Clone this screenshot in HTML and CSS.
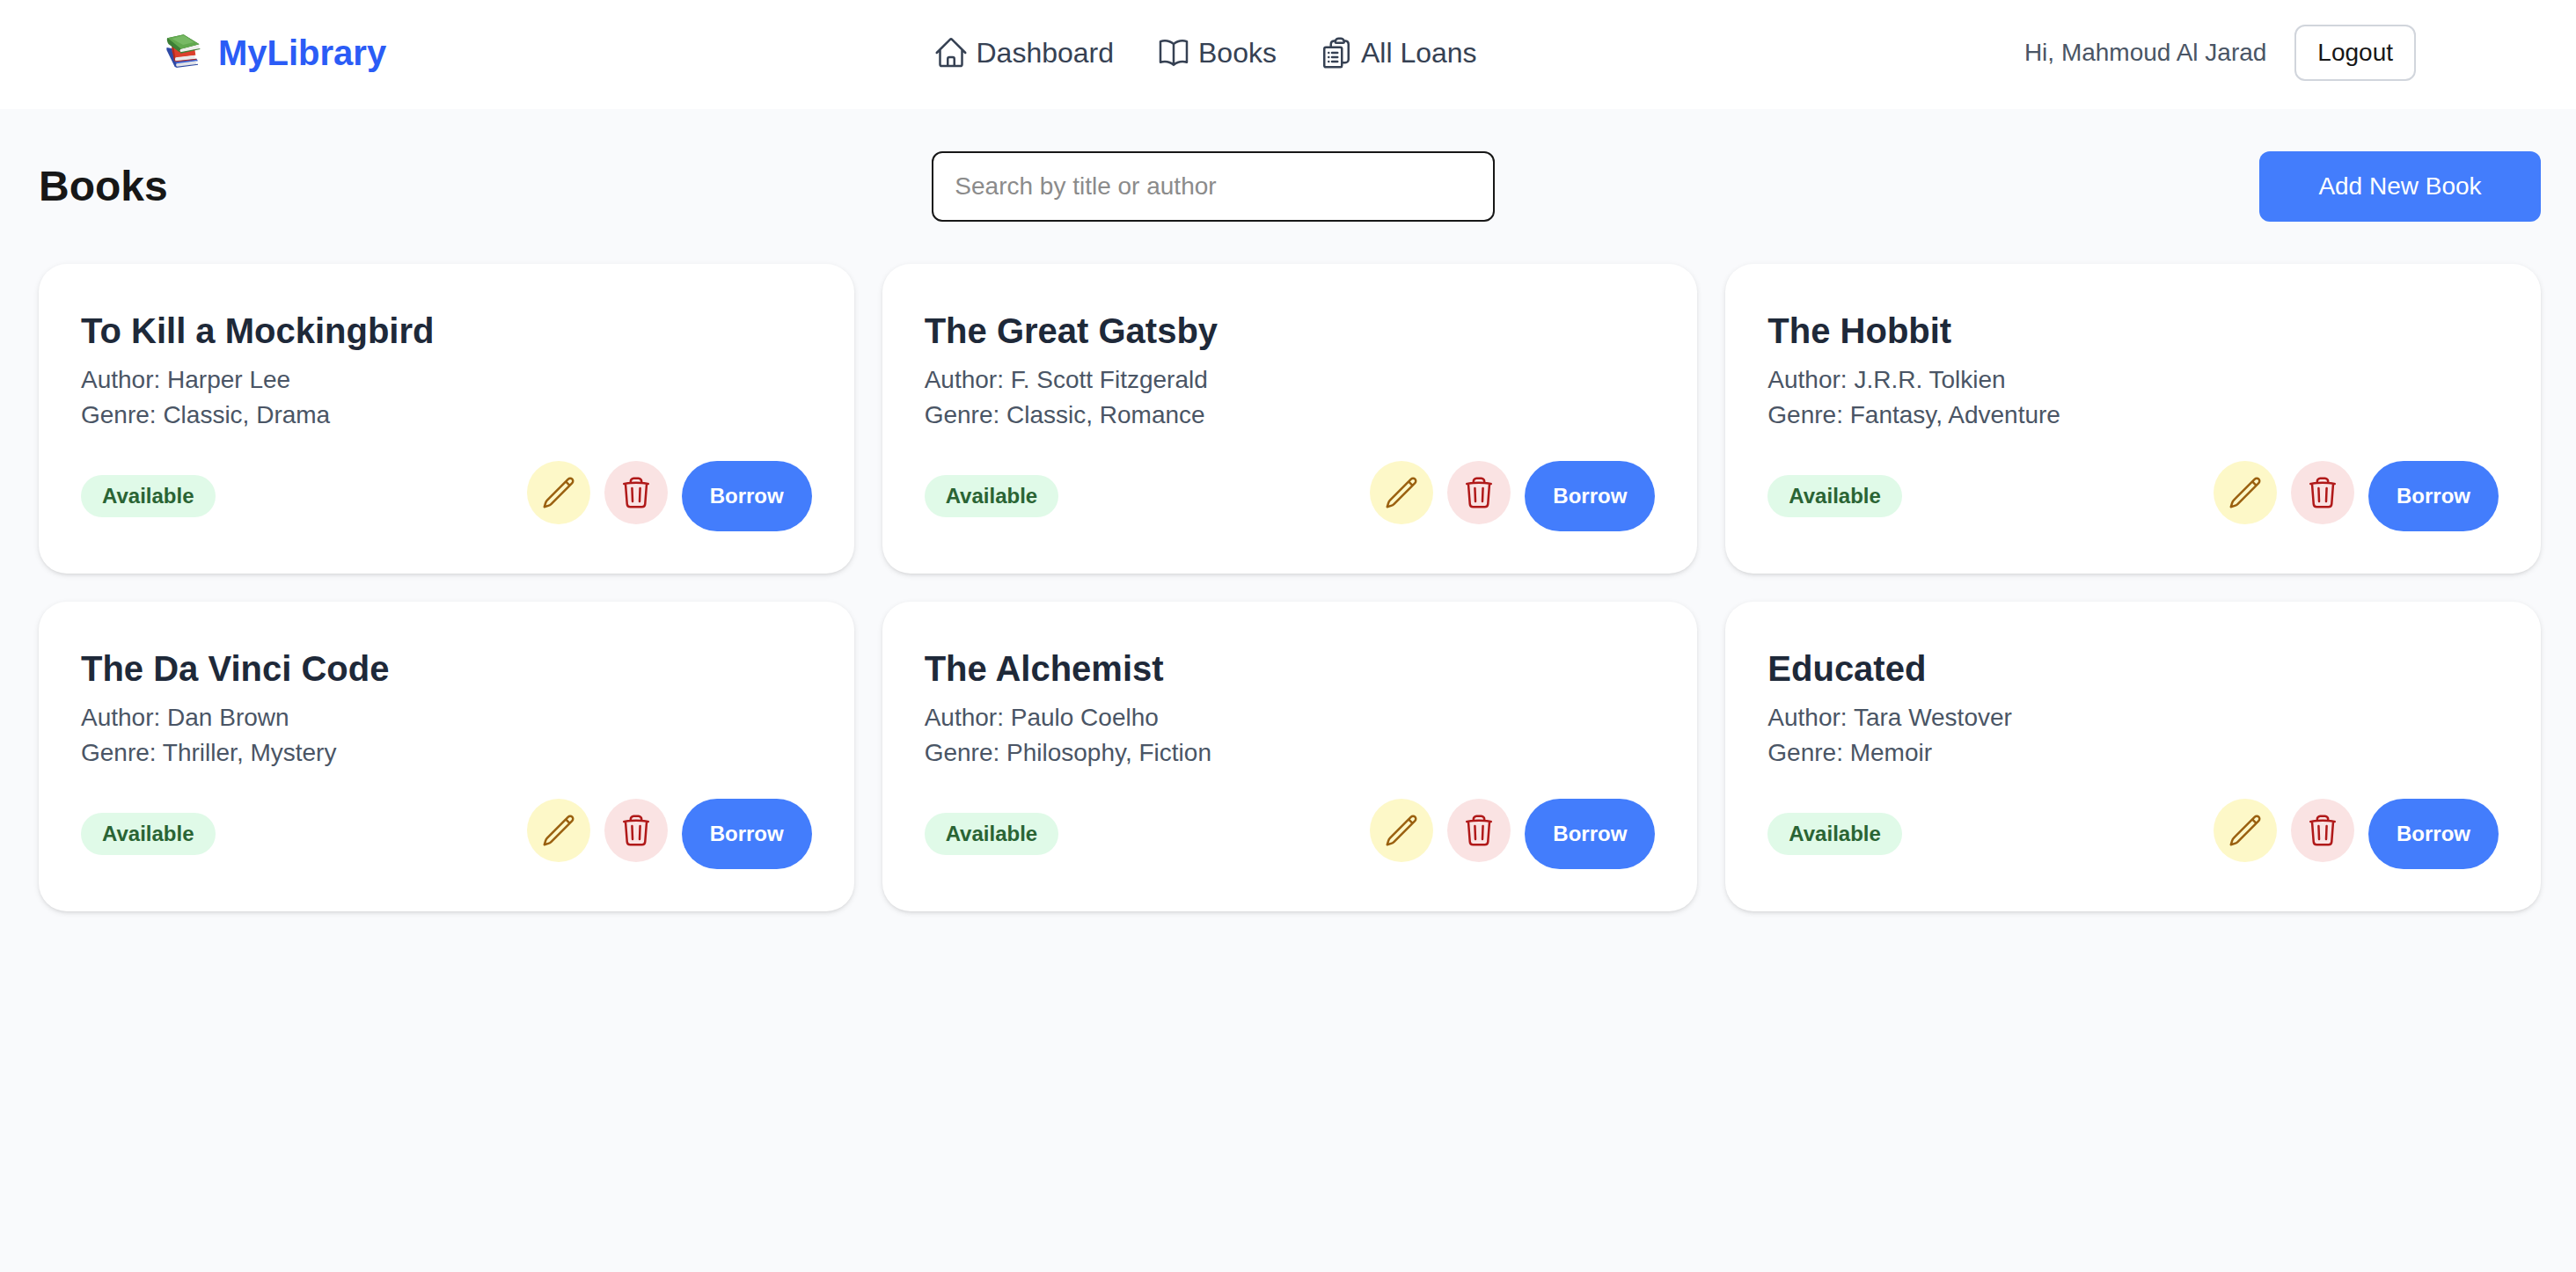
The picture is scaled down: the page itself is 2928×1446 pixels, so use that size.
FILE: index.html
```html
<!DOCTYPE html>
<html lang="en">
<head>
<meta charset="utf-8">
<meta name="viewport" content="width=device-width, initial-scale=1">
<title>MyLibrary</title>
<link rel="stylesheet" href="styles.css">
</head>
<body>
<svg class="sprite" aria-hidden="true">
  <symbol id="pencil" viewBox="0 0 24 24"><path d="m16.862 4.487 1.687-1.688a1.875 1.875 0 1 1 2.652 2.652L6.832 19.82a4.5 4.5 0 0 1-1.897 1.13l-2.685.8.8-2.685a4.5 4.5 0 0 1 1.13-1.897L16.863 4.487Zm0 0L19.5 7.125"/></symbol>
  <symbol id="trash" viewBox="0 0 24 24"><path d="m14.74 9-.346 9m-4.788 0L9.26 9m9.968-3.21c.342.052.682.107 1.022.166m-1.022-.165L18.16 19.673a2.25 2.25 0 0 1-2.244 2.077H8.084a2.25 2.25 0 0 1-2.244-2.077L4.772 5.79m14.456 0a48.108 48.108 0 0 0-3.478-.397m-12 .562c.34-.059.68-.114 1.022-.165m0 0a48.11 48.11 0 0 1 3.478-.397m7.5 0v-.916c0-1.18-.91-2.164-2.09-2.201a51.964 51.964 0 0 0-3.32 0c-1.18.037-2.09 1.022-2.09 2.201v.916m7.5 0a48.667 48.667 0 0 0-7.5 0"/></symbol>
</svg>
<header class="header">
  <div class="header-inner">
    <a class="logo" href="#">
      <svg class="logo-mark" viewBox="0 0 144 144" aria-hidden="true">
        <path d="M11 54l20 4 20 50-7 14-6-2-25-52c-3-5-4-10-2-14z" fill="#2f4aa6"/>
        <path d="M36 98l76-6 5 8-70 12z" fill="#3f62cf"/>
        <path d="M44 109l68-9c-3 4-2 8 1 11l-67 9c-4-3-5-7-2-11z" fill="#dfe2e8"/>
        <path d="M44 119l73-9v3l-74 10z" fill="#2b479f"/>
        <path d="M28 48l32 20 46-8 3 20-70 10-10-22z" fill="#dc3f2c"/>
        <path d="M28 48l6 4 8 49-6-1-6-30z" fill="#b32a1f"/>
        <path d="M41 88l67-8c-3 4-2 8 0 13l-66 8c-4-4-4-9-1-13z" fill="#e9e9eb"/>
        <path d="M40 100l72-8v3l-71 8z" fill="#b32a1f"/>
        <path d="M12 22l56-12 54 33-64 17c-4 4-3 8 0 13L17 43c-4-6-7-14-5-21z" fill="#3d7f35"/>
        <path d="M14 22l54-12 53 33-61 16z" fill="#62a94f"/>
        <path d="M28 24l40-11 36 23-38 9z" fill="#77b964"/>
        <path d="M59 60l63-15c-4 4-3 9 0 13l-62 13c-4-3-4-8-1-11z" fill="#efefed"/>
        <path d="M57 70l67-13v3l-66 14z" fill="#3d7f35"/>
      </svg>
      <span>MyLibrary</span>
    </a>
    <nav class="nav">
      <a href="#"><svg class="icon" viewBox="0 0 24 24" aria-hidden="true"><path d="m2.250 12 8.954-8.955c.44-.439 1.152-.439 1.591 0L21.750 12M4.500 9.750v10.125c0 .621.504 1.125 1.125 1.125H9.750v-4.875c0-.621.504-1.125 1.125-1.125h2.250c.621 0 1.125.504 1.125 1.125V21h4.125c.621 0 1.125-.504 1.125-1.125V9.750M8.250 21h8.250"/></svg><span>Dashboard</span></a>
      <a href="#"><svg class="icon" viewBox="0 0 24 24" aria-hidden="true"><path d="M12 6.042A8.967 8.967 0 0 0 6 3.750c-1.052 0-2.062.180-3 .512v14.250A8.987 8.987 0 0 1 6 18c2.305 0 4.408.867 6 2.292m0-14.250a8.966 8.966 0 0 1 6-2.292c1.052 0 2.062.180 3 .512v14.250A8.987 8.987 0 0 0 18 18a8.967 8.967 0 0 0-6 2.292m0-14.250v14.250"/></svg><span>Books</span></a>
      <a href="#"><svg class="icon" viewBox="0 0 24 24" aria-hidden="true"><path d="M9 12h3.750M9 15h3.750M9 18h3.750m3 .750H18a2.250 2.250 0 0 0 2.250-2.250V6.108c0-1.135-.845-2.098-1.976-2.192a48.424 48.424 0 0 0-1.123-.080m-5.801 0c-.065.210-.100.433-.100.664 0 .414.336.750.750.750h4.500a.750.750 0 0 0 .750-.750 2.250 2.250 0 0 0-.100-.664m-5.800 0A2.251 2.251 0 0 1 13.500 2.250H15c1.012 0 1.867.668 2.150 1.586m-5.800 0c-.376.023-.750.050-1.124.080C9.095 4.010 8.250 4.973 8.250 6.108V8.250m0 0H4.875c-.621 0-1.125.504-1.125 1.125v11.250c0 .621.504 1.125 1.125 1.125h9.750c.621 0 1.125-.504 1.125-1.125V9.375c0-.621-.504-1.125-1.125-1.125H8.250ZM6.750 12h.008v.008H6.750V12Zm0 3h.008v.008H6.750V15Zm0 3h.008v.008H6.750V18Z"/></svg><span>All Loans</span></a>
    </nav>
    <div class="user">
      <span>Hi, Mahmoud Al Jarad</span>
      <button class="logout" type="button">Logout</button>
    </div>
  </div>
</header>
<main class="main">
  <div class="toolbar">
    <h1>Books</h1>
    <input class="search" type="text" placeholder="Search by title or author" aria-label="Search by title or author">
    <button class="add" type="button">Add New Book</button>
  </div>
  <div class="grid">
    <article class="card">
      <h2>To Kill a Mockingbird</h2>
      <p>Author: Harper Lee</p>
      <p>Genre: Classic, Drama</p>
      <div class="card-footer">
        <span class="badge">Available</span>
        <div class="actions">
          <button class="round edit" type="button" aria-label="Edit"><svg class="icon"><use href="#pencil"/></svg></button>
          <button class="round delete" type="button" aria-label="Delete"><svg class="icon"><use href="#trash"/></svg></button>
          <button class="borrow" type="button">Borrow</button>
        </div>
      </div>
    </article>
    <article class="card">
      <h2>The Great Gatsby</h2>
      <p>Author: F. Scott Fitzgerald</p>
      <p>Genre: Classic, Romance</p>
      <div class="card-footer">
        <span class="badge">Available</span>
        <div class="actions">
          <button class="round edit" type="button" aria-label="Edit"><svg class="icon"><use href="#pencil"/></svg></button>
          <button class="round delete" type="button" aria-label="Delete"><svg class="icon"><use href="#trash"/></svg></button>
          <button class="borrow" type="button">Borrow</button>
        </div>
      </div>
    </article>
    <article class="card">
      <h2>The Hobbit</h2>
      <p>Author: J.R.R. Tolkien</p>
      <p>Genre: Fantasy, Adventure</p>
      <div class="card-footer">
        <span class="badge">Available</span>
        <div class="actions">
          <button class="round edit" type="button" aria-label="Edit"><svg class="icon"><use href="#pencil"/></svg></button>
          <button class="round delete" type="button" aria-label="Delete"><svg class="icon"><use href="#trash"/></svg></button>
          <button class="borrow" type="button">Borrow</button>
        </div>
      </div>
    </article>
    <article class="card">
      <h2>The Da Vinci Code</h2>
      <p>Author: Dan Brown</p>
      <p>Genre: Thriller, Mystery</p>
      <div class="card-footer">
        <span class="badge">Available</span>
        <div class="actions">
          <button class="round edit" type="button" aria-label="Edit"><svg class="icon"><use href="#pencil"/></svg></button>
          <button class="round delete" type="button" aria-label="Delete"><svg class="icon"><use href="#trash"/></svg></button>
          <button class="borrow" type="button">Borrow</button>
        </div>
      </div>
    </article>
    <article class="card">
      <h2>The Alchemist</h2>
      <p>Author: Paulo Coelho</p>
      <p>Genre: Philosophy, Fiction</p>
      <div class="card-footer">
        <span class="badge">Available</span>
        <div class="actions">
          <button class="round edit" type="button" aria-label="Edit"><svg class="icon"><use href="#pencil"/></svg></button>
          <button class="round delete" type="button" aria-label="Delete"><svg class="icon"><use href="#trash"/></svg></button>
          <button class="borrow" type="button">Borrow</button>
        </div>
      </div>
    </article>
    <article class="card">
      <h2>Educated</h2>
      <p>Author: Tara Westover</p>
      <p>Genre: Memoir</p>
      <div class="card-footer">
        <span class="badge">Available</span>
        <div class="actions">
          <button class="round edit" type="button" aria-label="Edit"><svg class="icon"><use href="#pencil"/></svg></button>
          <button class="round delete" type="button" aria-label="Delete"><svg class="icon"><use href="#trash"/></svg></button>
          <button class="borrow" type="button">Borrow</button>
        </div>
      </div>
    </article>
  </div>
</main>
</body>
</html>
```
FILE: styles.css
```css
*,
*::before,
*::after {
  box-sizing: border-box;
}

body {
  margin: 0;
  min-height: 100vh;
  background: #f9fafc;
  color: #171717;
  font-family: Arial, "Liberation Sans", Helvetica, sans-serif;
  font-size: 28px;
  line-height: 40px;
}

h1,
h2,
p {
  margin: 0;
}

a {
  color: inherit;
  text-decoration: none;
}

button,
input {
  margin: 0;
  border: 0;
  color: inherit;
  font: inherit;
}

button {
  cursor: pointer;
}

.sprite {
  display: none;
}

.icon {
  display: block;
  flex: none;
  width: 40px;
  height: 40px;
  fill: none;
  stroke: currentColor;
  stroke-width: 1.5;
  stroke-linecap: round;
  stroke-linejoin: round;
}

.header {
  padding: 28px 28px 32px 32px;
  background: #fff;
}

.header-inner {
  display: flex;
  align-items: center;
  justify-content: space-between;
  max-width: 2560px;
  margin: 0 auto;
}

.logo {
  display: flex;
  align-items: center;
  gap: 14px;
  color: #2b5cf6;
  font-size: 40px;
  font-weight: 700;
  line-height: 56px;
}

.logo-mark {
  width: 48px;
  height: 48px;
}

.nav {
  display: flex;
  gap: 48px;
  color: #364153;
  font-size: 32px;
  line-height: 48px;
}

.nav a {
  display: flex;
  align-items: center;
  gap: 8px;
}

.user {
  display: flex;
  align-items: center;
  gap: 32px;
  color: #4a5565;
}

.logout {
  padding: 10px 24px;
  border: 2px solid #d1d5dc;
  border-radius: 12px;
  background: #fff;
  color: #171717;
}

.main {
  padding: 48px 40px 48px 44px;
}

.toolbar {
  display: flex;
  align-items: center;
  justify-content: space-between;
  margin-bottom: 48px;
}

.toolbar h1 {
  font-size: 48px;
  font-weight: 700;
  line-height: 64px;
}

.search {
  width: 640px;
  height: 80px;
  padding: 0 24px;
  border: 2px solid #171717;
  border-radius: 12px;
  background: #fff;
}

.search::placeholder {
  color: #8b8b8b;
  opacity: 1;
}

.add {
  width: 320px;
  height: 80px;
  border-radius: 12px;
  background: #437dfc;
  color: #fff;
}

.grid {
  display: grid;
  grid-template-columns: repeat(3, minmax(0, 1fr));
  gap: 32px;
}

.card {
  padding: 48px;
  border-radius: 32px;
  background: #fff;
  color: #4a5565;
  box-shadow: 0 2px 6px rgb(0 0 0 / 10%), 0 2px 4px -2px rgb(0 0 0 / 10%);
}

.card h2 {
  margin-bottom: 8px;
  color: #1e2939;
  font-size: 40px;
  font-weight: 700;
  line-height: 56px;
}

.card-footer {
  display: flex;
  align-items: center;
  justify-content: space-between;
  margin-top: 32px;
}

.badge {
  padding: 8px 24px;
  border-radius: 24px;
  background: #e0fae8;
  color: #2a6434;
  font-size: 24px;
  font-weight: 700;
  line-height: 32px;
}

.actions {
  display: flex;
  align-items: flex-start;
  gap: 16px;
}

.round {
  padding: 16px;
  border-radius: 50%;
}

.edit {
  background: #fdf8c8;
  color: #9a600f;
}

.delete {
  background: #fae3e3;
  color: #b01919;
}

.borrow {
  height: 80px;
  padding: 0 32px;
  border-radius: 40px;
  background: #437dfc;
  color: #fff;
  font-size: 24px;
  font-weight: 700;
  line-height: 32px;
}
```
